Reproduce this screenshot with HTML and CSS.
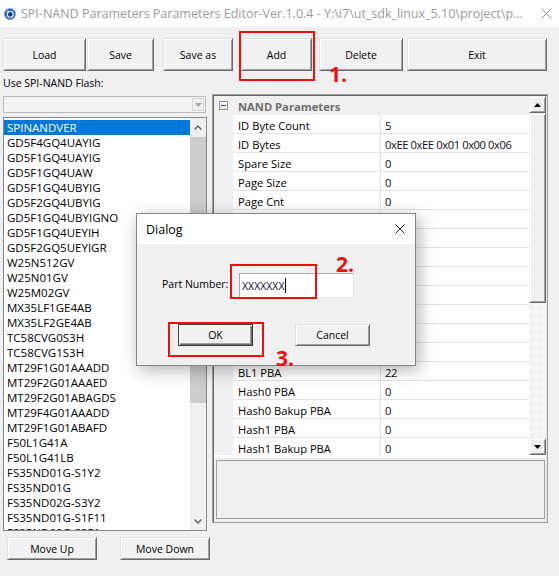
FILE: index.html
```html
<!DOCTYPE html>
<html>
<head>
<meta charset="utf-8">
<title>SPI-NAND Parameters Editor</title>
<link rel="stylesheet" href="styles.css">
</head>
<body>
<div class="window">
  <div class="titlebar">
    <svg class="appicon" viewBox="0 0 12 12">
      <circle cx="6" cy="6" r="5.6" fill="#2b63c8"/>
      <circle cx="6" cy="6" r="5.6" fill="none" stroke="#7fa8ea" stroke-width="0.8"/>
      <circle cx="6.3" cy="6.4" r="2.9" fill="#15388a" stroke="#ffffff" stroke-width="1.1"/>
      <circle cx="4" cy="3.6" r="1.1" fill="#cfe0ff"/>
    </svg>
    <span class="title">SPI-NAND Parameters Parameters Editor-Ver.1.0.4 - Y:\i7\ut_sdk_linux_5.10\project\p...</span>
    <svg class="close" viewBox="0 0 12 12"><path d="M0.5 0.5 L11.5 11.5 M11.5 0.5 L0.5 11.5" stroke="#8a8a8a" stroke-width="1" fill="none"/></svg>
  </div>

  <div class="client">
    <div class="toolbar">
      <button class="btn b-load">Load</button>
      <button class="btn b-save">Save</button>
      <button class="btn b-saveas">Save as</button>
      <button class="btn b-add">Add</button>
      <button class="btn b-delete">Delete</button>
      <button class="btn b-exit">Exit</button>
    </div>

    <div class="content">
      <div class="leftcol">
        <div class="label">Use SPI-NAND Flash:</div>
        <div class="combo">
          <div class="combo-btn">
            <svg viewBox="0 0 7 4" class="combo-arrow"><path d="M0 0 H7 L3.5 4 Z" fill="#a3a3a3"/></svg>
          </div>
        </div>
        <div class="list">
          <div class="items">
            <div class="item sel">SPINANDVER</div>
            <div class="item">GD5F4GQ4UAYIG</div>
            <div class="item">GD5F1GQ4UAYIG</div>
            <div class="item">GD5F1GQ4UAW</div>
            <div class="item">GD5F1GQ4UBYIG</div>
            <div class="item">GD5F2GQ4UBYIG</div>
            <div class="item">GD5F1GQ4UBYIGNO</div>
            <div class="item">GD5F1GQ4UEYIH</div>
            <div class="item">GD5F2GQ5UEYIGR</div>
            <div class="item">W25N512GV</div>
            <div class="item">W25N01GV</div>
            <div class="item">W25M02GV</div>
            <div class="item">MX35LF1GE4AB</div>
            <div class="item">MX35LF2GE4AB</div>
            <div class="item">TC58CVG0S3H</div>
            <div class="item">TC58CVG1S3H</div>
            <div class="item">MT29F1G01AAADD</div>
            <div class="item">MT29F2G01AAAED</div>
            <div class="item">MT29F2G01ABAGDS</div>
            <div class="item">MT29F4G01AAADD</div>
            <div class="item">MT29F1G01ABAFD</div>
            <div class="item">F50L1G41A</div>
            <div class="item">F50L1G41LB</div>
            <div class="item">FS35ND01G-S1Y2</div>
            <div class="item">FS35ND01G</div>
            <div class="item">FS35ND02G-S3Y2</div>
            <div class="item">FS35ND01G-S1F11</div>
            <div class="item">FS35ND02G-S3F1</div>
          </div>
          <div class="lscroll">
            <div class="ls-up"><svg viewBox="0 0 8 5"><path d="M0.6 4.4 L4 1 L7.4 4.4" stroke="#606060" stroke-width="1.4" fill="none"/></svg></div>
            <div class="ls-thumb"></div>
            <div class="ls-track"></div>
            <div class="ls-down"><svg viewBox="0 0 8 5"><path d="M0.6 0.6 L4 4 L7.4 0.6" stroke="#606060" stroke-width="1.4" fill="none"/></svg></div>
          </div>
        </div>
        <div class="movebtns">
          <button class="btn b-up">Move Up</button>
          <button class="btn b-down">Move Down</button>
        </div>
      </div>

      <div class="gridpanel">
        <div class="grid">
          <div class="rows">
            <div class="cat"><span class="m"><span class="minus"></span></span><span class="catname">NAND Parameters</span></div>
            <div class="row"><span class="m"></span><span class="n">ID Byte Count</span><span class="v">5</span></div>
            <div class="row"><span class="m"></span><span class="n">ID Bytes</span><span class="v">0xEE 0xEE 0x01 0x00 0x06</span></div>
            <div class="row"><span class="m"></span><span class="n">Spare Size</span><span class="v">0</span></div>
            <div class="row"><span class="m"></span><span class="n">Page Size</span><span class="v">0</span></div>
            <div class="row"><span class="m"></span><span class="n">Page Cnt</span><span class="v">0</span></div>
            <div class="row"><span class="m"></span><span class="n"></span><span class="v"></span></div>
            <div class="row"><span class="m"></span><span class="n"></span><span class="v"></span></div>
            <div class="row"><span class="m"></span><span class="n"></span><span class="v"></span></div>
            <div class="row"><span class="m"></span><span class="n"></span><span class="v"></span></div>
            <div class="row"><span class="m"></span><span class="n"></span><span class="v"></span></div>
            <div class="row"><span class="m"></span><span class="n"></span><span class="v"></span></div>
            <div class="row"><span class="m"></span><span class="n"></span><span class="v"></span></div>
            <div class="row"><span class="m"></span><span class="n"></span><span class="v"></span></div>
            <div class="row"><span class="m"></span><span class="n">BL1 PBA</span><span class="v">22</span></div>
            <div class="row"><span class="m"></span><span class="n">Hash0 PBA</span><span class="v">0</span></div>
            <div class="row"><span class="m"></span><span class="n">Hash0 Bakup PBA</span><span class="v">0</span></div>
            <div class="row"><span class="m"></span><span class="n">Hash1 PBA</span><span class="v">0</span></div>
            <div class="row"><span class="m"></span><span class="n">Hash1 Bakup PBA</span><span class="v">0</span></div>
          </div>
          <div class="gscroll">
            <div class="gs-btn"><svg viewBox="0 0 7 4"><path d="M0 4 H7 L3.5 0 Z" fill="#000"/></svg></div>
            <div class="gs-thumb"></div>
            <div class="gs-track"></div>
            <div class="gs-btn"><svg viewBox="0 0 7 4"><path d="M0 0 H7 L3.5 4 Z" fill="#000"/></svg></div>
          </div>
        </div>
        <div class="desc"></div>
      </div>
    </div>
  </div>

  <div class="dialog">
    <div class="dlg-title">
      <span class="dlg-name">Dialog</span>
      <svg class="dlg-close" viewBox="0 0 10 10"><path d="M0.5 0.5 L9.5 9.5 M9.5 0.5 L0.5 9.5" stroke="#222" stroke-width="1" fill="none"/></svg>
    </div>
    <div class="dlg-body">
      <div class="dlg-row">
        <span class="dlg-label">Part Number:</span>
        <div class="input"><span class="input-text">XXXXXXX</span><span class="caret"></span></div>
      </div>
      <div class="dlg-btns">
        <button class="btn dbtn default">OK</button>
        <button class="btn dbtn cancel">Cancel</button>
      </div>
    </div>
  </div>

  <div class="mark mark1"></div>
  <div class="mark mark2"></div>
  <div class="mark mark3"></div>
  <span class="num num1">1.</span>
  <span class="num num2">2.</span>
  <span class="num num3">3.</span>
</div>
</body>
</html>
```

FILE: styles.css
```css
* { box-sizing: border-box; }

html, body {
  margin: 0;
  padding: 0;
}

body {
  width: 559px;
  height: 576px;
  overflow: hidden;
  background: #f0f0f0;
  color: #000;
  font-family: "Open Sans", "Noto Sans", sans-serif;
}

.window {
  position: relative;
  width: 559px;
  height: 576px;
}

/* title bar */
.titlebar {
  height: 27px;
  background: #fff;
  display: flex;
  align-items: center;
}

.appicon {
  width: 12px;
  height: 12px;
  margin-left: 4px;
  flex: none;
}

.title {
  margin-left: 5px;
  font-size: 12.5px;
  color: #9a9a9a;
  white-space: nowrap;
  overflow: hidden;
  flex: 1;
}

.close {
  width: 11px;
  height: 11px;
  margin: 0 7px 0 17px;
  flex: none;
}

/* client area */
.client {
  padding: 11px 0 0 3px;
}

.toolbar {
  display: flex;
  height: 33px;
}

.btn {
  -webkit-appearance: none;
  appearance: none;
  font-family: inherit;
  font-size: 10.5px;
  color: #000;
  background: #f1f1f1;
  border: 1px solid;
  border-color: #e3e3e3 #696969 #696969 #e3e3e3;
  box-shadow: inset 1px 1px #fff, inset -1px -1px #a0a0a0;
  padding: 0;
  margin: 0;
  display: flex;
  align-items: center;
  justify-content: center;
  flex: none;
}

.b-load { width: 83px; }
.b-save { width: 67px; margin-left: 1px; }
.b-saveas { width: 70px; margin-left: 9px; }
.b-add { width: 71px; margin-left: 8px; }
.b-delete { width: 84px; margin-left: 7px; }
.b-exit { width: 140px; margin-left: 4px; }

.content {
  display: flex;
  align-items: flex-start;
  margin-top: 4px;
}

.leftcol {
  width: 204px;
  flex: none;
}

.label {
  font-size: 10.5px;
  height: 16px;
  line-height: 16px;
  white-space: nowrap;
}

.combo {
  margin-top: 5px;
  height: 17px;
  width: 203px;
  border: 1px solid #bcbcbc;
  background: #f3f3f3;
  display: flex;
  justify-content: flex-end;
  align-items: center;
  padding-right: 1px;
}

.combo-btn {
  width: 12px;
  height: 13px;
  border: 1px solid #d5d5d5;
  background: #f0f0f0;
  display: flex;
  align-items: center;
  justify-content: center;
}

.combo-arrow {
  width: 7px;
  height: 4px;
}

.list {
  margin-top: 4px;
  height: 414px;
  width: 204px;
  border: 1px solid #828790;
  background: #fff;
  display: flex;
}

.items {
  width: 186px;
  padding-top: 2px;
  overflow: hidden;
  height: 412px;
}

.item {
  height: 15px;
  line-height: 15px;
  padding-left: 3px;
  font-size: 11.5px;
  color: #000;
  white-space: nowrap;
}

.item.sel {
  background: #0078d7;
  color: #fff;
}

.lscroll {
  width: 16px;
  height: 412px;
  background: #f0f0f0;
  display: flex;
  flex-direction: column;
}

.ls-up, .ls-down {
  height: 19px;
  display: flex;
  align-items: center;
  justify-content: center;
  flex: none;
}

.ls-down { height: 17px; }

.ls-up svg, .ls-down svg {
  width: 8px;
  height: 5px;
}

.ls-thumb {
  height: 266px;
  background: #cdcdcd;
  flex: none;
}

.ls-track { flex: 1; }

.movebtns {
  display: flex;
  margin-top: 6px;
  height: 23px;
}

.b-up { width: 90px; margin-left: 4px; }
.b-down { width: 90px; margin-left: 23px; }

/* property grid */
.gridpanel {
  margin-left: 5px;
  margin-top: 19px;
  width: 336px;
  height: 429px;
  border: 1px solid #a0a0a0;
  box-shadow: inset 1px 1px #696969, inset -1px -1px #e3e3e3;
  padding: 1px;
  flex: none;
}

.grid {
  height: 361px;
  display: flex;
  background: #fff;
  align-items: flex-start;
}

.rows {
  width: 315px;
  height: 359px;
  overflow: hidden;
  flex: none;
}

.row, .cat {
  display: flex;
  height: 19px;
}

.cat {
  background: #f0f0f0;
}

.m {
  width: 19px;
  flex: none;
  background: #f0f0f0;
  display: flex;
  align-items: center;
  justify-content: center;
}

.minus {
  width: 9px;
  height: 9px;
  border: 1px solid #919191;
  background: linear-gradient(#ffffff, #e8e8e8);
  position: relative;
  display: block;
}

.minus::after {
  content: "";
  position: absolute;
  left: 1px;
  top: 3px;
  width: 5px;
  height: 1px;
  background: #1f4a8c;
}

.catname {
  padding-left: 5px;
  padding-top: 2px;
  font-size: 11.2px;
  font-weight: 700;
  color: #6d6d6d;
  line-height: 17px;
  white-space: nowrap;
}

.n {
  width: 148px;
  flex: none;
  border-right: 1px solid #e3e3e3;
  border-bottom: 1px solid #e3e3e3;
  padding-left: 5px;
  padding-top: 2px;
  font-size: 11.2px;
  line-height: 17px;
  white-space: nowrap;
  overflow: hidden;
}

.v {
  flex: 1;
  border-bottom: 1px solid #e3e3e3;
  padding-left: 4px;
  padding-top: 2px;
  font-size: 11.2px;
  line-height: 17px;
  letter-spacing: -0.4px;
  white-space: nowrap;
  overflow: hidden;
  color: #0a0a1a;
}

.gscroll {
  width: 17px;
  height: 359px;
  display: flex;
  flex-direction: column;
  flex: none;
}

.gs-btn, .gs-thumb {
  background: #f0f0f0;
  border: 1px solid;
  border-color: #f0f0f0 #696969 #696969 #f0f0f0;
  box-shadow: inset 1px 1px #fff, inset -1px -1px #a0a0a0;
  flex: none;
}

.gs-btn {
  height: 17px;
  display: flex;
  align-items: center;
  justify-content: center;
}

.gs-btn svg {
  width: 7px;
  height: 4px;
}

.gs-thumb { height: 190px; }

.gs-track {
  flex: 1;
  background-color: #fff;
  background-image: repeating-conic-gradient(#ececec 0 25%, #ffffff 0 50%);
  background-size: 2px 2px;
}

.desc {
  margin: 3px 1px 0 2px;
  height: 59px;
  border: 1px solid #a0a0a0;
  background: #f0f0f0;
}

/* dialog */
.dialog {
  position: absolute;
  left: 136px;
  top: 213px;
  width: 280px;
  height: 153px;
  border: 1px solid #858585;
  background: #f0f0f0;
  box-shadow: 3px 4px 16px rgba(0, 0, 0, 0.3);
}

.dlg-title {
  height: 30px;
  background: #fff;
  display: flex;
  align-items: center;
  justify-content: space-between;
  padding: 0 10px 0 9px;
}

.dlg-name {
  font-size: 12.5px;
}

.dlg-close {
  width: 10px;
  height: 10px;
}

.dlg-body {
  padding: 29px 0 0 25px;
}

.dlg-row {
  display: flex;
  align-items: center;
  height: 25px;
}

.dlg-label {
  width: 77px;
  font-size: 10.5px;
  line-height: 14px;
  margin-top: -3px;
  flex: none;
}

.input {
  width: 115px;
  height: 25px;
  background: #fff;
  border: 1px solid;
  border-color: #a8a8a8 #e6e6e6 #e6e6e6 #a8a8a8;
  display: flex;
  align-items: center;
  padding-left: 2px;
}

.input-text {
  font-size: 10.5px;
  line-height: 14px;
  color: #0a0a30;
}

.caret {
  width: 1px;
  height: 15px;
  background: #000;
  margin-left: 1px;
}

.dlg-btns {
  display: flex;
  margin-top: 26px;
  padding-left: 16px;
}

.dbtn {
  width: 75px;
  height: 22px;
}

.dbtn.default {
  border-color: #3c3c3c;
  box-shadow: inset 1px 1px #fff, inset -1px -1px #696969, inset -2px -2px #a0a0a0;
}

.dbtn.cancel { margin-left: 42px; }

/* annotations */
.mark {
  position: absolute;
  border: 2px solid #f20d0d;
}

.mark1 { left: 239px; top: 31px; width: 76px; height: 50px; }
.mark2 { left: 230px; top: 264px; width: 87px; height: 35px; }
.mark3 { left: 168px; top: 322px; width: 96px; height: 35px; }

.num {
  position: absolute;
  font-size: 21px;
  line-height: 21px;
  font-weight: 700;
  color: #f20d0d;
}

.num1 { left: 329px; top: 64px; }
.num2 { left: 336px; top: 254px; }
.num3 { left: 276px; top: 348px; }
```
